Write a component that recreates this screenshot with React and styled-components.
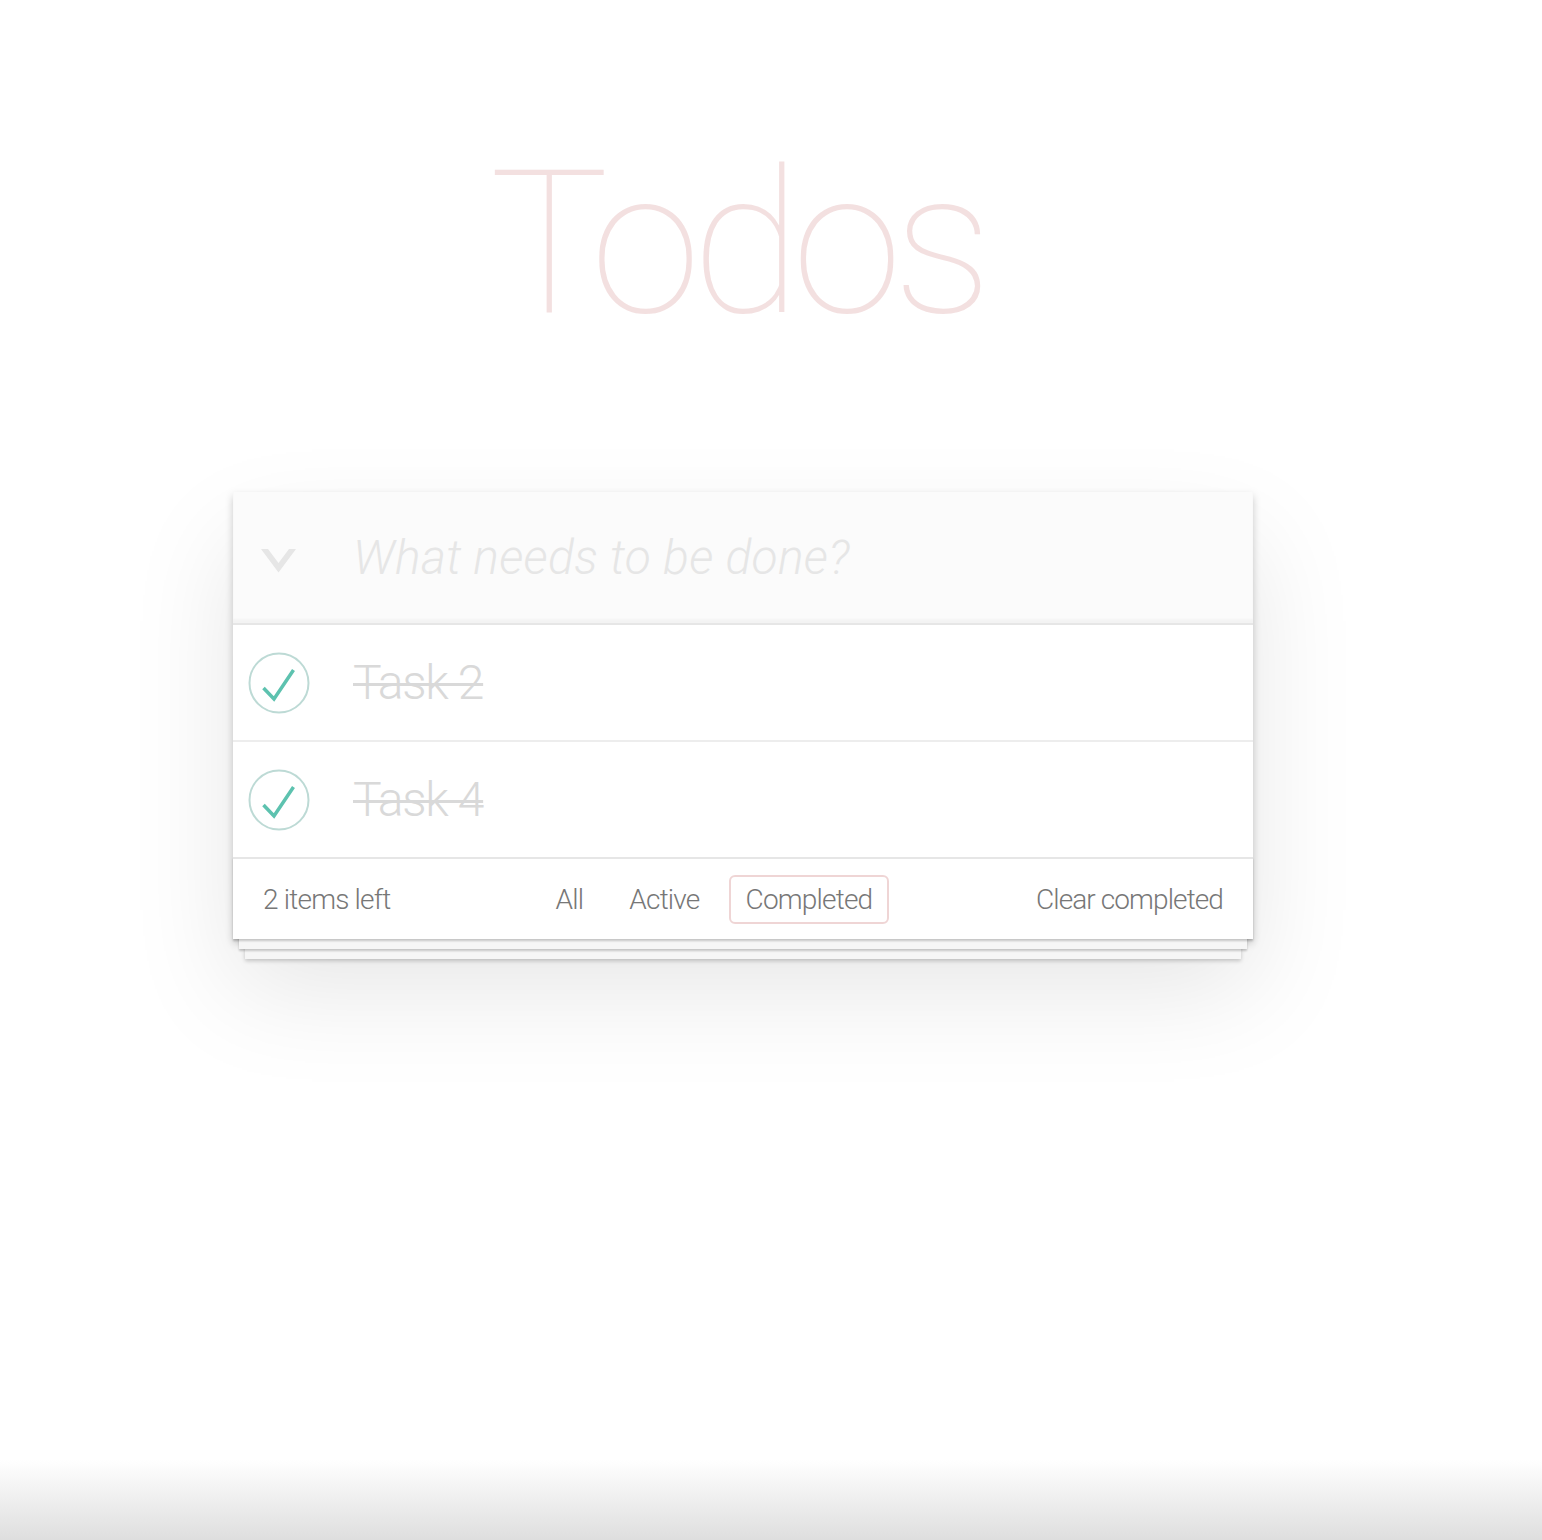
import React from "react";
import styled, { createGlobalStyle } from "styled-components";

const Global = createGlobalStyle`
  html, body { margin: 0; padding: 0; }
  body {
    min-height: 1540px;
    background: linear-gradient(to bottom, #ffffff 0, #ffffff 1460px, #dedede 1540px);
    font-family: Roboto, "Helvetica Neue", "Liberation Sans", sans-serif;
    font-weight: 300;
    color: #4d4d4d;
    -webkit-font-smoothing: antialiased;
  }
`;

const Page = styled.div`
  padding: 144px 56px 0 0;
  display: flex;
  flex-direction: column;
  align-items: center;
`;

const Title = styled.h1`
  margin: 0 0 148px;
  padding-right: 13px;
  height: 200px;
  font-size: 200px;
  line-height: 200px;
  font-weight: 100;
  letter-spacing: -9px;
  color: rgba(175, 47, 47, 0.15);
  text-align: center;
`;

const Card = styled.section`
  width: 1020px;
  background: #fff;
  box-shadow: 0 4px 8px 0 rgba(0, 0, 0, 0.2), 0 50px 100px 0 rgba(0, 0, 0, 0.1);
`;

const Header = styled.header`
  display: flex;
  align-items: center;
  height: 131px;
  background: #fbfbfb;
  box-shadow: inset 0 -4px 2px rgba(0, 0, 0, 0.03);
  border-bottom: 2px solid #e6e6e6;
`;

const ToggleAll = styled.button`
  width: 120px;
  height: 100%;
  padding: 7px 0 0 28px;
  border: none;
  background: transparent;
  display: flex;
  align-items: center;
  cursor: pointer;
`;

const NewTodo = styled.input`
  flex: 1;
  border: none;
  outline: none;
  background: transparent;
  padding: 0 32px 0 0;
  font-family: inherit;
  font-size: 48px;
  line-height: 67px;
  font-weight: 300;
  color: #4d4d4d;
  letter-spacing: 0.3px;
  &::placeholder {
    font-style: italic;
    font-weight: 300;
    color: #e6e6e6;
  }
`;

const List = styled.ul`
  margin: 0;
  padding: 0;
  list-style: none;
`;

const Row = styled.li`
  display: flex;
  align-items: center;
  height: 115px;
  border-bottom: 2px solid #ededed;
  &:last-child { border-bottom: none; }
`;

const CheckBox = styled.span`
  display: flex;
  margin-left: 15px;
  width: 62px;
  height: 62px;
`;

const Label = styled.label`
  padding-left: 43px;
  font-size: 48px;
  line-height: 58px;
  letter-spacing: -1.3px;
  color: #d9d9d9;
  text-decoration: ${(p) => (p.$done ? "line-through" : "none")};
  text-decoration-thickness: 3px;
`;

const Footer = styled.footer`
  display: grid;
  grid-template-columns: 1fr auto 1fr;
  align-items: center;
  height: 80px;
  padding: 0 30px;
  border-top: 2px solid #e6e6e6;
  font-size: 28px;
  letter-spacing: -0.8px;
  color: #777;
  box-shadow: 0 2px 2px rgba(0, 0, 0, 0.2), 0 16px 0 -6px #f6f6f6,
    0 18px 2px -6px rgba(0, 0, 0, 0.2), 0 32px 0 -12px #f6f6f6,
    0 34px 4px -12px rgba(0, 0, 0, 0.2);
`;

const Count = styled.span`
  justify-self: start;
`;

const Filters = styled.ul`
  display: flex;
  gap: 12px;
  margin: 0 58px 0 0;
  padding: 0;
  list-style: none;
`;

const FilterLink = styled.a`
  display: block;
  padding: 6px 15px;
  line-height: 33px;
  border: 2px solid ${(p) => (p.$selected ? "rgba(175, 47, 47, 0.2)" : "transparent")};
  border-radius: 6px;
  color: inherit;
  text-decoration: none;
`;

const Clear = styled.button`
  justify-self: end;
  border: none;
  background: none;
  padding: 0;
  font-family: inherit;
  font-size: 28px;
  font-weight: 300;
  letter-spacing: -0.9px;
  color: #777;
  cursor: pointer;
`;

const Chevron = () => (
  <svg width="35" height="24" viewBox="0 0 35 24">
    <polygon points="0,0 7,0 17.5,14 28,0 35,0 17.5,23.5" fill="#e6e6e6" />
  </svg>
);

const Check = () => (
  <svg width="62" height="62" viewBox="0 0 62 62">
    <circle cx="31" cy="31" r="29.5" fill="none" stroke="#bddad5" strokeWidth="2" />
    <polyline
      points="15.5,36 26,47 45.5,18"
      fill="none"
      stroke="#5dc2af"
      strokeWidth="3.5"
    />
  </svg>
);

const todos = [
  { id: 2, title: "Task 2", done: true },
  { id: 4, title: "Task 4", done: true },
];

export default function App() {
  return (
    <>
      <Global />
      <Page>
        <Title>Todos</Title>
        <Card>
          <Header>
            <ToggleAll aria-label="Mark all as complete">
              <Chevron />
            </ToggleAll>
            <NewTodo placeholder="What needs to be done?" />
          </Header>
          <List>
            {todos.map((t) => (
              <Row key={t.id}>
                <CheckBox>
                  <Check />
                </CheckBox>
                <Label $done={t.done}>{t.title}</Label>
              </Row>
            ))}
          </List>
          <Footer>
            <Count>2 items left</Count>
            <Filters>
              <li><FilterLink href="#/">All</FilterLink></li>
              <li><FilterLink href="#/active">Active</FilterLink></li>
              <li><FilterLink href="#/completed" $selected>Completed</FilterLink></li>
            </Filters>
            <Clear>Clear completed</Clear>
          </Footer>
        </Card>
      </Page>
    </>
  );
}
